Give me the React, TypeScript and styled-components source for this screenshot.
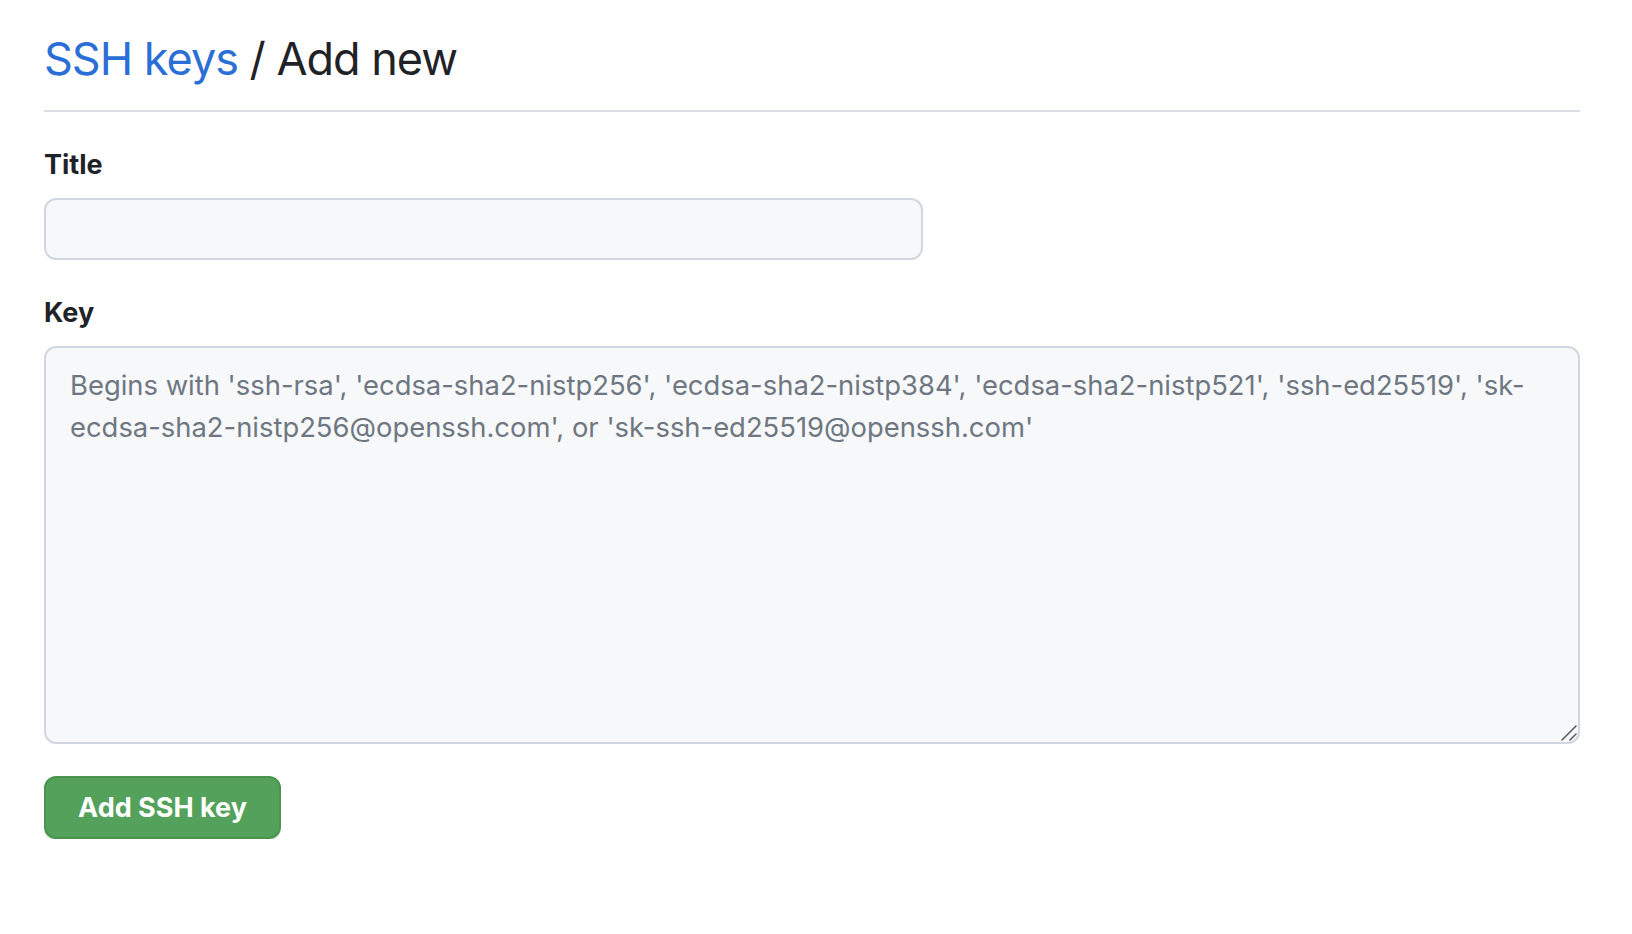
import styled, { createGlobalStyle } from 'styled-components';

const GlobalStyle = createGlobalStyle`
  html, body {
    margin: 0;
    padding: 0;
    background: #ffffff;
  }
  body {
    font-family: Inter, 'Liberation Sans', Arial, sans-serif;
    color: #1f2328;
  }
`;

const Page = styled.main`
  width: 1536px;
  margin-left: 44px;
  padding-top: 29px;
`;

const Subhead = styled.div`
  padding-bottom: 21px;
  border-bottom: 2px solid #d8dee4;
  margin-bottom: 33px;
`;

const Heading = styled.h1`
  margin: 0;
  font-family: Inter, 'Liberation Sans', Arial, sans-serif;
  font-size: 45px;
  font-weight: 400;
  letter-spacing: -1px;
  line-height: 60px;
  color: #1f2328;

  a {
    color: #2b6fd6;
    text-decoration: none;
  }
`;

const Field = styled.div<{ $gap: number }>`
  display: flex;
  flex-direction: column;
  margin-bottom: ${(props) => props.$gap}px;
`;

const Label = styled.label`
  font-family: Inter, 'Noto Sans', sans-serif;
  font-weight: 700;
  font-size: 27px;
  line-height: 40px;
  color: #1f2328;
  margin-bottom: 13px;
`;

const TextInput = styled.input`
  box-sizing: border-box;
  width: 879px;
  height: 62px;
  padding: 0 24px;
  border: 2px solid #d0d7de;
  border-radius: 12px;
  background: #f6f8fa;
  font-family: Inter, 'Liberation Sans', Arial, sans-serif;
  font-size: 27.4px;
  color: #1f2328;
  outline: none;
`;

const AreaWrap = styled.div`
  position: relative;
  width: 1536px;
  height: 398px;
`;

const KeyArea = styled.textarea`
  display: block;
  box-sizing: border-box;
  width: 100%;
  height: 100%;
  margin: 0;
  padding: 16px 24px;
  border: 2px solid #d0d7de;
  border-radius: 12px;
  background: #f6f8fa;
  font-family: Inter, 'Liberation Sans', Arial, sans-serif;
  font-size: 27.4px;
  line-height: 42px;
  color: #1f2328;
  outline: none;
  resize: none;

  &::placeholder {
    color: #6e7781;
    opacity: 1;
  }
`;

const Grip = styled.svg`
  position: absolute;
  right: 3px;
  bottom: 3px;
  width: 16px;
  height: 16px;
  pointer-events: none;
`;

const SubmitButton = styled.button`
  box-sizing: border-box;
  width: 237px;
  height: 63px;
  border: 2px solid #4a9450;
  border-radius: 12px;
  background: #54a15b;
  color: #ffffff;
  font-family: Inter, 'Noto Sans', sans-serif;
  font-weight: 700;
  font-size: 27px;
  cursor: pointer;
  box-shadow: 0 2px 0 rgba(31, 35, 40, 0.1);
`;

const placeholder =
  "Begins with 'ssh-rsa', 'ecdsa-sha2-nistp256', 'ecdsa-sha2-nistp384', 'ecdsa-sha2-nistp521', 'ssh-ed25519', 'sk-ecdsa-sha2-nistp256@openssh.com', or 'sk-ssh-ed25519@openssh.com'";

export default function App() {
  return (
    <>
      <GlobalStyle />
      <Page>
        <Subhead>
          <Heading>
            <a href="#keys">SSH keys</a> / Add new
          </Heading>
        </Subhead>
        <form onSubmit={(e) => e.preventDefault()}>
          <Field $gap={33}>
            <Label htmlFor="key-title">Title</Label>
            <TextInput id="key-title" type="text" />
          </Field>
          <Field $gap={32}>
            <Label htmlFor="key-body">Key</Label>
            <AreaWrap>
              <KeyArea id="key-body" placeholder={placeholder} />
              <Grip viewBox="0 0 16 16" aria-hidden="true">
                <path
                  d="M1 15 L15 1 M9 15 L15 9"
                  stroke="#5b6068"
                  strokeWidth="1.6"
                  strokeLinecap="round"
                  fill="none"
                />
              </Grip>
            </AreaWrap>
          </Field>
          <SubmitButton type="submit">Add SSH key</SubmitButton>
        </form>
      </Page>
    </>
  );
}
